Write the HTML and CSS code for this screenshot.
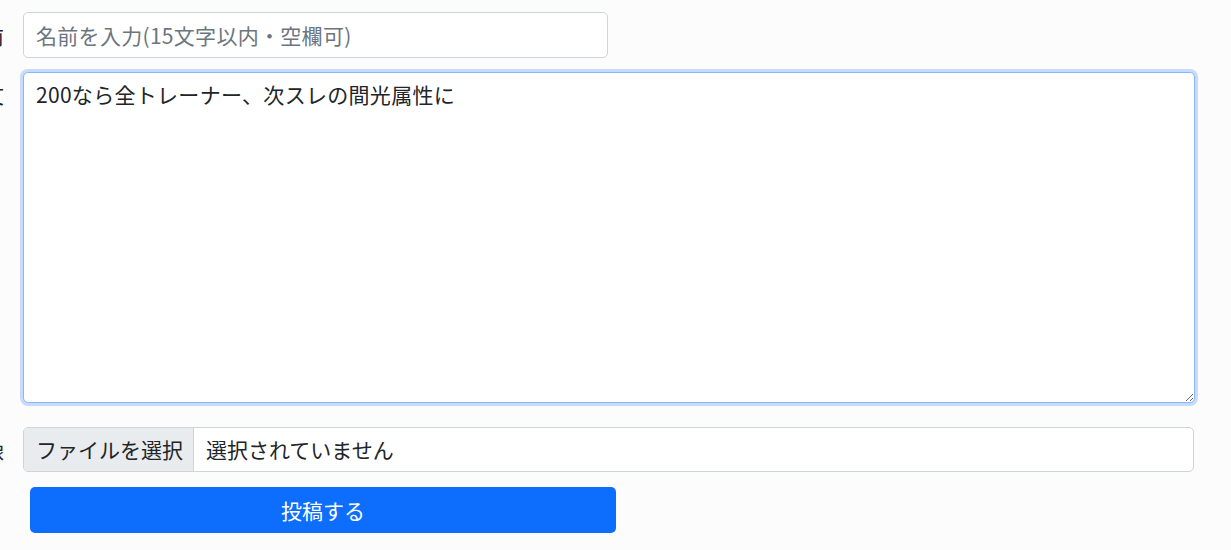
FILE: index.html
```html
<!DOCTYPE html>
<html lang="ja">
<head>
    <meta charset="UTF-8">
    <meta name="viewport" content="width=device-width, initial-scale=1.0">
    <title>投稿フォーム</title>
    <link rel="stylesheet" href="styles.css">
</head>
<body>
    <!-- Post Form -->
    <form class="post-form">
        <div class="form-row">
            <label class="form-label" for="name"><span>名前</span></label>
            <input type="text" id="name" class="form-control name-input" placeholder="名前を入力(15文字以内・空欄可)">
        </div>

        <div class="form-row body-row">
            <label class="form-label label-top" for="body"><span>本文</span></label>
            <textarea id="body" class="form-control body-input is-focused">200なら全トレーナー、次スレの間光属性に</textarea>
        </div>

        <div class="form-row file-row">
            <label class="form-label" for="image"><span>画像</span></label>
            <div class="file-input" id="image">
                <span class="file-button">ファイルを選択</span>
                <span class="file-name">選択されていません</span>
            </div>
        </div>

        <button type="submit" class="btn-submit">投稿する</button>
    </form>
</body>
</html>
```

FILE: styles.css
```css
body {
    margin: 0;
    background-color: #fcfcfc;
    font-family: "Noto Sans CJK JP", "Noto Sans", sans-serif;
    color: #212529;
}

.post-form {
    padding: 12px 36px 0 0;
}

.form-row {
    display: grid;
    grid-template-columns: 4px 1fr;
    column-gap: 19px;
    align-items: center;
    margin-bottom: 14px;
}

.form-label {
    display: flex;
    justify-content: flex-end;
    overflow: hidden;
    white-space: nowrap;
    font-size: 21px;
    line-height: 30px;
    color: #212529;
}

.label-top {
    align-self: start;
    padding-top: 7px;
}

.form-control {
    box-sizing: border-box;
    font-family: inherit;
    font-size: 21px;
    line-height: 30px;
    letter-spacing: 0.3px;
    padding: 7px 12px;
    border: 1px solid #ced4da;
    border-radius: 5px;
    background-color: #fff;
    color: #212529;
    outline: none;
}

.form-control::placeholder {
    color: #6c757d;
}

.name-input {
    width: 585px;
    height: 46px;
}

.body-row {
    margin-bottom: 24px;
}

.body-input {
    display: block;
    width: 100%;
    height: 331px;
    padding-top: 6px;
    resize: vertical;
}

.is-focused {
    border-color: #86b7fe;
    box-shadow: 0 0 0 3px rgba(13, 110, 253, 0.22);
}

.file-row {
    margin-bottom: 15px;
}

.file-input {
    display: flex;
    height: 45px;
    box-sizing: border-box;
    border: 1px solid #ced4da;
    border-radius: 5px;
    background: #fff;
    overflow: hidden;
    font-size: 21px;
    line-height: 30px;
    margin-right: 1px;
}

.file-button {
    padding: 6px 10px 6px 12px;
    background-color: #e9ecef;
    border-right: 1px solid #ced4da;
}

.file-name {
    padding: 6px 12px;
}

.btn-submit {
    display: block;
    width: 586px;
    height: 46px;
    margin-left: 30px;
    border: none;
    border-radius: 5px;
    background-color: #0d6efd;
    color: #fff;
    font-family: inherit;
    font-size: 21px;
    cursor: pointer;
}

.btn-submit:hover {
    background-color: #0b5ed7;
}
```
